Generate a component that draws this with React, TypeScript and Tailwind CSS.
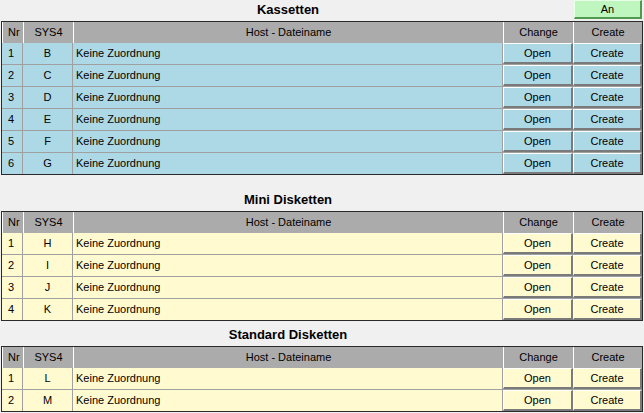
import React from "react"

type Section = {
  title: string
  rowBg: string
  rows: string[]
}

const sections: Section[] = [
  { title: "Kassetten", rowBg: "bg-[#add8e6]", rows: ["B", "C", "D", "E", "F", "G"] },
  { title: "Mini Disketten", rowBg: "bg-[#fffad0]", rows: ["H", "I", "J", "K"] },
  { title: "Standard Disketten", rowBg: "bg-[#fffad0]", rows: ["L", "M"] },
]

const cols = "grid grid-cols-[21px_50px_430px_70px_69px]"

function CellButton({ label }: { label: string }) {
  return (
    <div className="h-full overflow-hidden">
      <button className="flex h-full w-full items-center justify-center border-t border-l border-b-2 border-r-2 border-t-white border-l-white border-b-[#7a7a7a] border-r-[#7a7a7a]">
        {label}
      </button>
    </div>
  )
}

function Grid({ section }: { section: Section }) {
  const last = section.rows.length - 1
  return (
    <div className="w-[642px] ml-px border border-[#2a2a2a]">
      <div className={`${cols} h-[21px] bg-[#ababab]`}>
        <div className="flex items-center pl-[5px] border-l border-white">Nr</div>
        <div className="flex items-center justify-center border-l border-white">SYS4</div>
        <div className="flex items-center justify-center border-l border-white">Host - Dateiname</div>
        <div className="flex items-center justify-center border-l border-white">Change</div>
        <div className="flex items-center justify-center border-l border-white">Create</div>
      </div>
      {section.rows.map((drive, i) => (
        <div
          key={drive}
          className={`${cols} overflow-hidden ${section.rowBg} ${
            i === last ? "h-[21px]" : "h-[22px] border-b border-[#a0a0a0]"
          }`}
        >
          <div className="flex items-center pl-[6px] border-r border-[#a0a0a0]">{i + 1}</div>
          <div className="flex items-center justify-center border-r border-[#a0a0a0]">{drive}</div>
          <div className="flex items-center pl-[3px] border-r border-[#a0a0a0]">Keine Zuordnung</div>
          <CellButton label="Open" />
          <CellButton label="Create" />
        </div>
      ))}
    </div>
  )
}

function Title({ text, className = "" }: { text: string; className?: string }) {
  return (
    <div className={`flex w-[576px] items-center justify-center text-[13px] font-bold ${className}`}>
      {text}
    </div>
  )
}

export default function App() {
  return (
    <div
      className="w-[644px] h-[413px] overflow-hidden bg-[#f0f0f0] text-[11px] text-black"
      style={{ fontFamily: '"Liberation Sans", Arial, sans-serif' }}
    >
      <div className="relative h-[21px]">
        <Title text={sections[0].title} className="h-[20px]" />
        <button className="absolute right-[2px] top-0 h-[19px] w-[68px] bg-[#bff5bf] border-t border-l border-b-2 border-r-2 border-t-[#e8ffe8] border-l-[#e8ffe8] border-b-[#4f9a4f] border-r-[#4f9a4f]">
          An
        </button>
      </div>
      <Grid section={sections[0]} />
      <Title text={sections[1].title} className="mt-[11px] h-[25px] pt-[3px]" />
      <Grid section={sections[1]} />
      <Title text={sections[2].title} className="h-[25px] pt-[2px]" />
      <Grid section={sections[2]} />
    </div>
  )
}
